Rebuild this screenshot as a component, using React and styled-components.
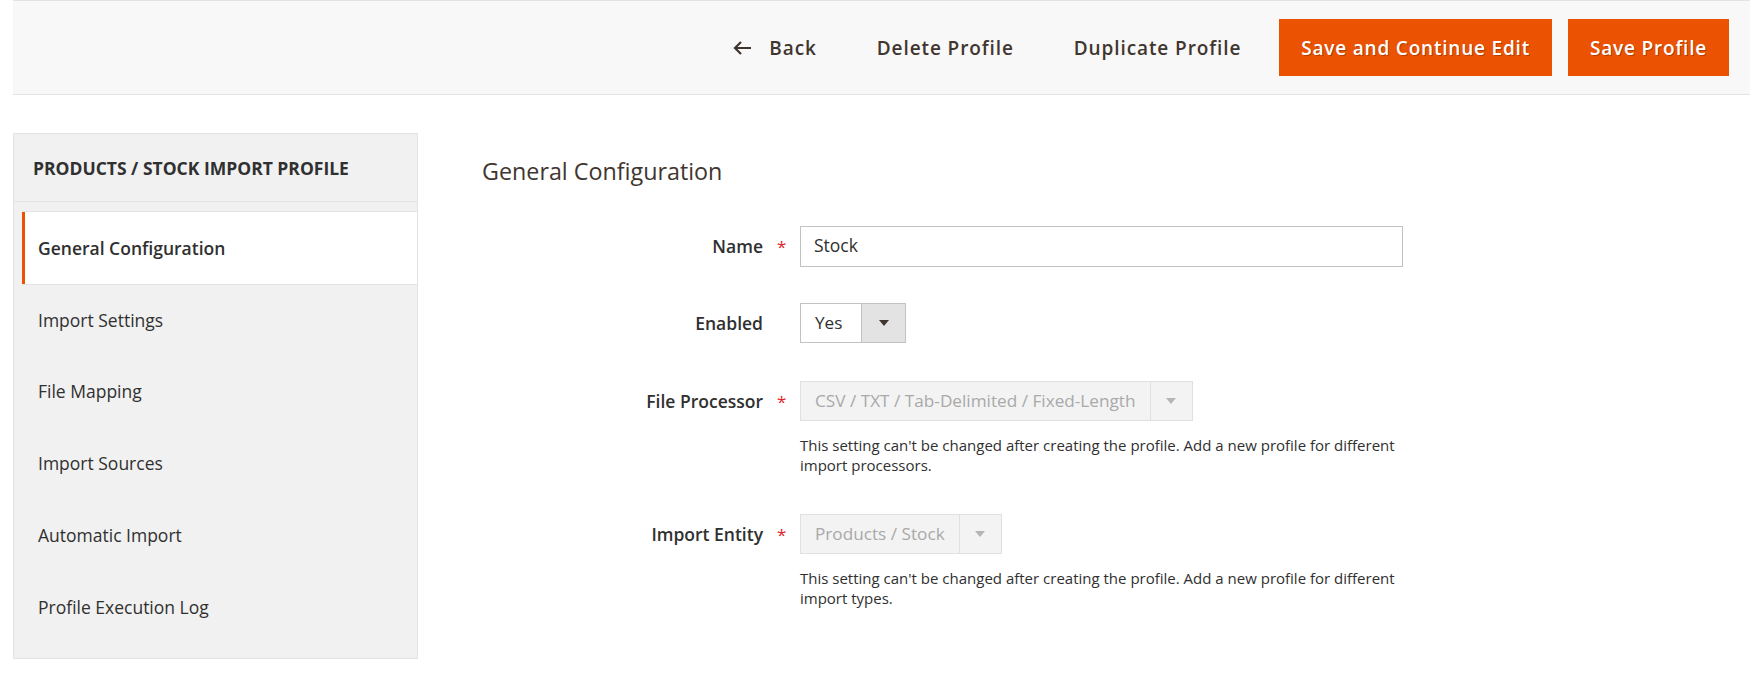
import React from "react";
import styled, { createGlobalStyle } from "styled-components";

const Colors = {
  Text: "#303030",
  TextDark: "#41362f",
  Accent: "#eb5202",
  Border: "#e3e3e3",
  InputBorder: "#c2c2c2",
  BgBar: "#f8f8f8",
  BgNav: "#f1f1f1",
  Disabled: "#a9a9a9",
  DisabledBg: "#f3f3f3",
  Required: "#e22626",
};

const GlobalStyle = createGlobalStyle`
  * { box-sizing: border-box; }
  body {
    margin: 0;
    background: #fff;
    font-family: "Open Sans", "Noto Sans", sans-serif;
    color: ${Colors.Text};
  }
`;

const Page = styled.div`
  padding-left: 13px;
`;

const HeaderBar = styled.header`
  height: 95px;
  display: flex;
  align-items: center;
  justify-content: flex-end;
  gap: 16px;
  padding-right: 21px;
  background: ${Colors.BgBar};
  border-top: 1px solid ${Colors.Border};
  border-bottom: 1px solid ${Colors.Border};
`;

const LinkButton = styled.button`
  display: flex;
  align-items: center;
  gap: 17px;
  padding: 0 22px;
  height: 57px;
  border: none;
  background: transparent;
  font-family: inherit;
  font-size: 19px;
  font-weight: 600;
  letter-spacing: 0.9px;
  color: ${Colors.TextDark};
  cursor: pointer;
`;

const PrimaryButton = styled.button`
  height: 57px;
  padding: 0 21px;
  border: 1px solid ${Colors.Accent};
  background: ${Colors.Accent};
  font-family: inherit;
  font-size: 19px;
  font-weight: 600;
  letter-spacing: 0.8px;
  color: #fff;
  text-shadow: 1px 1px 0 rgba(0, 0, 0, 0.25);
  cursor: pointer;
`;

const Body = styled.div`
  display: flex;
  align-items: flex-start;
  margin-top: 38px;
`;

const Sidebar = styled.nav`
  width: 405px;
  flex-shrink: 0;
  background: ${Colors.BgNav};
  border: 1px solid ${Colors.Border};
  padding-bottom: 15px;
`;

const SidebarTitle = styled.div`
  height: 68px;
  display: flex;
  align-items: center;
  padding-left: 19px;
  border-bottom: 1px solid ${Colors.Border};
  font-size: 17.5px;
  font-weight: 700;
  text-transform: uppercase;
  color: ${Colors.Text};
`;

const NavList = styled.ul`
  list-style: none;
  margin: 0;
  padding: 10px 0 0 8px;
`;

const NavItem = styled.li`
  height: 71.8px;
  display: flex;
  align-items: center;
  padding-left: 13px;
  border-left: 3px solid ${(p) => (p.$active ? Colors.Accent : "transparent")};
  background: ${(p) => (p.$active ? "#fff" : "transparent")};
  box-shadow: ${(p) => (p.$active ? `0 -1px 0 ${Colors.Border}, 0 1px 0 ${Colors.Border}` : "none")};
  font-size: 17.5px;
  font-weight: ${(p) => (p.$active ? 600 : 400)};
  color: ${Colors.Text};
`;

const Main = styled.main`
  padding-left: 64px;
`;

const SectionTitle = styled.h2`
  margin: 23px 0 40px;
  font-size: 23.3px;
  line-height: 30px;
  font-weight: 400;
  color: ${Colors.TextDark};
`;

const Field = styled.div`
  display: grid;
  grid-template-columns: 281px 37px auto;
  align-items: start;
  margin-bottom: ${(p) => p.$gap || 38}px;
`;

const Label = styled.label`
  height: 40px;
  display: flex;
  align-items: center;
  justify-content: flex-end;
  font-size: 17.5px;
  font-weight: 600;
  color: ${Colors.Text};
`;

const Required = styled.span`
  height: 40px;
  display: flex;
  align-items: center;
  padding-left: 14px;
  font-size: 17px;
  color: ${Colors.Required};
`;

const Control = styled.div`
  display: flex;
  flex-direction: column;
  align-items: flex-start;
`;

const TextInput = styled.input`
  width: 603px;
  height: 41px;
  padding: 0 13px 3px;
  border: 1px solid ${Colors.InputBorder};
  font-family: inherit;
  font-size: 17.5px;
  color: ${Colors.Text};
  outline: none;
`;

const Select = styled.div`
  display: inline-flex;
  height: 40px;
  border: 1px solid ${(p) => (p.$disabled ? "#e0e0e0" : Colors.InputBorder)};
  background: ${(p) => (p.$disabled ? Colors.DisabledBg : "#fff")};
  color: ${(p) => (p.$disabled ? Colors.Disabled : Colors.Text)};
  font-size: 17.2px;
`;

const SelectValue = styled.span`
  display: flex;
  align-items: center;
  padding: 0 ${(p) => p.$padRight || 14}px 2px 14px;
  white-space: nowrap;
`;

const SelectArrow = styled.span`
  width: ${(p) => (p.$disabled ? 42 : 44)}px;
  display: flex;
  align-items: center;
  justify-content: center;
  border-left: 1px solid ${(p) => (p.$disabled ? "#e0e0e0" : Colors.InputBorder)};
  background: ${(p) => (p.$disabled ? Colors.DisabledBg : "#e3e3e3")};
  &::after {
    content: "";
    border-left: 5px solid transparent;
    border-right: 5px solid transparent;
    border-top: 6px solid ${(p) => (p.$disabled ? "#b5b5b5" : Colors.TextDark)};
  }
`;

const Note = styled.div`
  width: 610px;
  margin-top: 14px;
  font-size: 15px;
  line-height: 20px;
  color: ${Colors.Text};
`;

const BackArrow = () => (
  <svg width="19" height="14" viewBox="0 0 19 14" fill="none">
    <path d="M18 7H2M8 1L2 7l6 6" stroke="#41362f" strokeWidth="2.2" />
  </svg>
);

const navItems = [
  "General Configuration",
  "Import Settings",
  "File Mapping",
  "Import Sources",
  "Automatic Import",
  "Profile Execution Log",
];

const DropDown = ({ value, disabled, padRight }) => (
  <Select $disabled={disabled}>
    <SelectValue $padRight={padRight}>{value}</SelectValue>
    <SelectArrow $disabled={disabled} />
  </Select>
);

export default function App() {
  return (
    <Page>
      <GlobalStyle />
      <HeaderBar>
        <LinkButton>
          <BackArrow />
          Back
        </LinkButton>
        <LinkButton>Delete Profile</LinkButton>
        <LinkButton>Duplicate Profile</LinkButton>
        <PrimaryButton>Save and Continue Edit</PrimaryButton>
        <PrimaryButton>Save Profile</PrimaryButton>
      </HeaderBar>

      <Body>
        <Sidebar>
          <SidebarTitle>Products / Stock Import Profile</SidebarTitle>
          <NavList>
            {navItems.map((item, i) => (
              <NavItem key={item} $active={i === 0}>
                {item}
              </NavItem>
            ))}
          </NavList>
        </Sidebar>

        <Main>
          <SectionTitle>General Configuration</SectionTitle>

          <Field $gap={36}>
            <Label>Name</Label>
            <Required>*</Required>
            <Control>
              <TextInput defaultValue="Stock" />
            </Control>
          </Field>

          <Field $gap={38}>
            <Label>Enabled</Label>
            <span />
            <Control>
              <DropDown value="Yes" padRight={19} />
            </Control>
          </Field>

          <Field $gap={39}>
            <Label>File Processor</Label>
            <Required>*</Required>
            <Control>
              <DropDown value="CSV / TXT / Tab-Delimited / Fixed-Length" disabled />
              <Note>
                This setting can't be changed after creating the profile. Add a
                new profile for different import processors.
              </Note>
            </Control>
          </Field>

          <Field>
            <Label>Import Entity</Label>
            <Required>*</Required>
            <Control>
              <DropDown value="Products / Stock" disabled />
              <Note>
                This setting can't be changed after creating the profile. Add a
                new profile for different import types.
              </Note>
            </Control>
          </Field>
        </Main>
      </Body>
    </Page>
  );
}
